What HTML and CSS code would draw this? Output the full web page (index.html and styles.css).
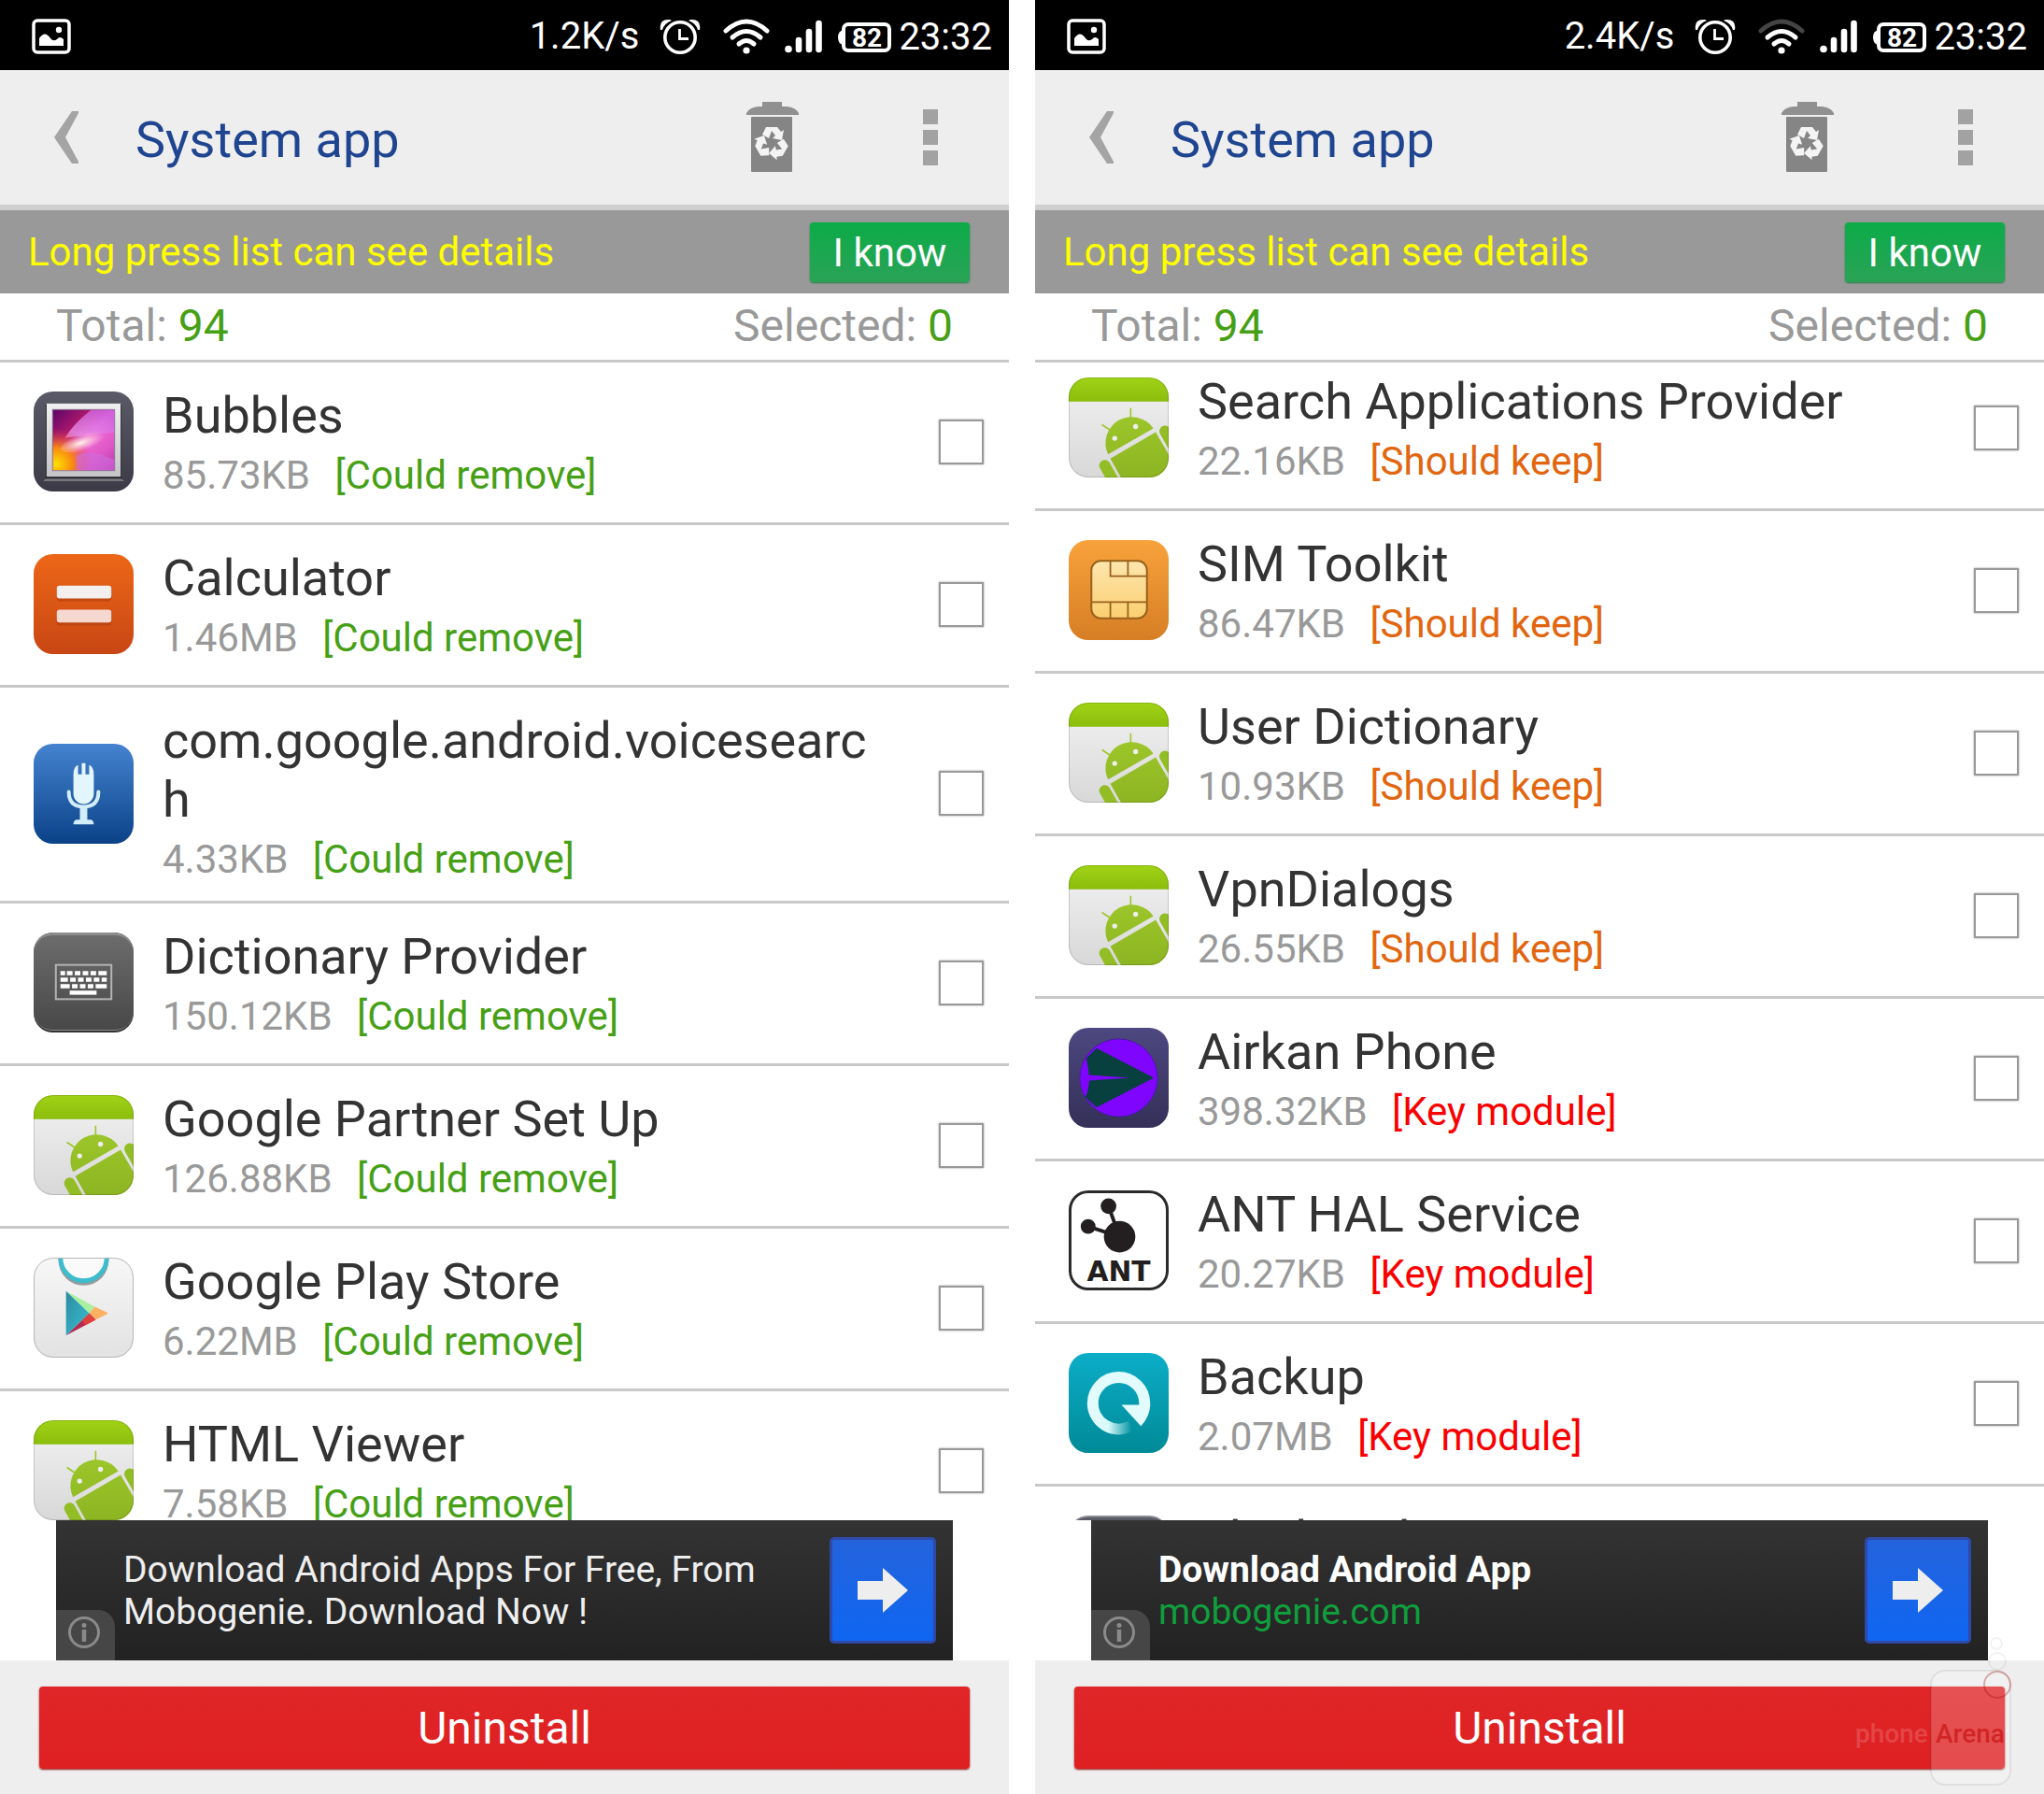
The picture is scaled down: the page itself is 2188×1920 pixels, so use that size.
FILE: index.html
```html
<!DOCTYPE html>
<html lang="en">
<head>
<meta charset="utf-8">
<title>System app</title>
<link rel="stylesheet" href="styles.css">
</head>
<body>
<svg class="defs" width="0" height="0" aria-hidden="true">
  <defs>
    <linearGradient id="g-green" x1="0" y1="0" x2="0" y2="1"><stop offset="0" stop-color="#a0d316"/><stop offset="1" stop-color="#8bbd0c"/></linearGradient>
    <linearGradient id="g-paper" x1="0" y1="0" x2="0" y2="1"><stop offset="0" stop-color="#f2f2f2"/><stop offset="1" stop-color="#d8d8d8"/></linearGradient>
    <linearGradient id="g-robot" gradientUnits="userSpaceOnUse" x1="0" y1="40" x2="0" y2="108"><stop offset="0" stop-color="#9cc62a"/><stop offset="1" stop-color="#8db522"/></linearGradient>
    <linearGradient id="g-slate" x1="0" y1="0" x2="0" y2="1"><stop offset="0" stop-color="#5a5a68"/><stop offset="1" stop-color="#3b3a46"/></linearGradient>
    <linearGradient id="g-photo" x1="0" y1="0" x2="1" y2="1"><stop offset="0" stop-color="#5c0468"/><stop offset=".3" stop-color="#a8186c"/><stop offset=".5" stop-color="#f06ad0"/><stop offset=".75" stop-color="#e058c8"/><stop offset="1" stop-color="#b83aa8"/></linearGradient>
    <linearGradient id="g-beam" x1="0" y1="1" x2="1" y2="0"><stop offset="0" stop-color="#f4a0f0"/><stop offset="1" stop-color="#c657e0"/></linearGradient>
    <radialGradient id="g-glow" cx=".05" cy=".9" r=".6"><stop offset="0" stop-color="#ffe000"/><stop offset=".45" stop-color="#f88a10"/><stop offset="1" stop-color="#e03050" stop-opacity="0"/></radialGradient>
    <radialGradient id="g-flare" cx=".4" cy=".5" r=".5"><stop offset="0" stop-color="#fff6e6"/><stop offset="1" stop-color="#ffc8e8" stop-opacity="0"/></radialGradient>
    <linearGradient id="g-frame" x1="0" y1="0" x2="0" y2="1"><stop offset="0" stop-color="#f0f0f0"/><stop offset="1" stop-color="#c4c4c8"/></linearGradient>
    <linearGradient id="g-orange" x1="0" y1="0" x2="0" y2="1"><stop offset="0" stop-color="#ec6717"/><stop offset="1" stop-color="#c84614"/></linearGradient>
    <linearGradient id="g-blue" x1="0" y1="0" x2="0" y2="1"><stop offset="0" stop-color="#4583d0"/><stop offset="1" stop-color="#0a4287"/></linearGradient>
    <linearGradient id="g-grey" x1="0" y1="0" x2="0" y2="1"><stop offset="0" stop-color="#6c6c6c"/><stop offset="1" stop-color="#484848"/></linearGradient>
    <linearGradient id="g-play" x1="0" y1="0" x2="0" y2="1"><stop offset="0" stop-color="#f7f7f7"/><stop offset="1" stop-color="#e2e2e2"/></linearGradient>
    <linearGradient id="g-teal" x1="0" y1="0" x2="1" y2="1"><stop offset="0" stop-color="#2b8aa0"/><stop offset="1" stop-color="#3cc0d4"/></linearGradient>
    <linearGradient id="g-sim" x1="0" y1="0" x2="0" y2="1"><stop offset="0" stop-color="#f8a23c"/><stop offset="1" stop-color="#d67e24"/></linearGradient>
    <linearGradient id="g-chip" x1="0" y1="0" x2="0" y2="1"><stop offset="0" stop-color="#fde6ae"/><stop offset="1" stop-color="#fbcf70"/></linearGradient>
    <linearGradient id="g-indigo" x1="0" y1="0" x2="0" y2="1"><stop offset="0" stop-color="#4d4880"/><stop offset="1" stop-color="#343058"/></linearGradient>
    <linearGradient id="g-backup" x1="0" y1="0" x2="0" y2="1"><stop offset="0" stop-color="#0cadc8"/><stop offset="1" stop-color="#008a97"/></linearGradient>
    <linearGradient id="g-ring" gradientUnits="userSpaceOnUse" x1="26" y1="0" x2="68" y2="0"><stop offset="0" stop-color="#e2fbfc"/><stop offset=".4" stop-color="#d8fafa"/><stop offset="1" stop-color="#d8fafa" stop-opacity="0"/></linearGradient>
    <clipPath id="c-tile"><rect width="108" height="108" rx="21"/></clipPath>

    <symbol id="i-android" viewBox="0 0 108 108">
      <g clip-path="url(#c-tile)">
        <rect width="108" height="108" fill="url(#g-paper)"/>
        <rect width="108" height="26" fill="url(#g-green)"/>
        <g fill="url(#g-robot)">
          <path d="M42.500 83A28.300 28.300 0 0 1 91.500 55Z"/>
          <path d="M94 59 45 87.500 57 109H109V85Z"/>
        </g>
        <path d="M39 95 49 113M104 58 116 79" stroke="#93bd25" stroke-width="12" stroke-linecap="round"/>
        <path d="M67 33V45M36 51 45 57" stroke="#9cc62a" stroke-width="1.600"/>
        <circle cx="49.700" cy="65.700" r="2.700" fill="#eee"/><circle cx="72.300" cy="53" r="2.700" fill="#eee"/>
      </g>
      <rect x=".5" y=".5" width="107" height="107" rx="21" fill="none" stroke="#000" stroke-opacity=".15"/>
    </symbol>
    <symbol id="i-gallery" viewBox="0 0 108 108">
      <rect width="108" height="108" rx="21" fill="url(#g-slate)"/>
      <path d="M13 14H95V94L98 97H10L13 94Z" fill="#25242c"/>
      <path d="M13 94H95L98 97H10Z" fill="#77757c"/>
      <rect x="14" y="13" width="80" height="79" fill="url(#g-frame)"/>
      <rect x="20" y="19" width="68" height="67" fill="#8a7a92"/>
      <rect x="21" y="20" width="66" height="65" fill="url(#g-photo)"/>
      <path d="M34 50Q42 36 62 20H87V44Z" fill="url(#g-beam)" opacity=".75"/>
      <rect x="21" y="20" width="66" height="65" fill="url(#g-glow)"/>
      <path d="M46 85V70Q60 60 87 74V85Z" fill="#cf6ae0" opacity=".6"/>
      <ellipse cx="56" cy="54" rx="28" ry="9" fill="url(#g-flare)" transform="rotate(-18 56 54)"/>
    </symbol>
    <symbol id="i-calc" viewBox="0 0 108 108">
      <rect width="108" height="108" rx="21" fill="url(#g-orange)"/>
      <rect x="25" y="37" width="59" height="14" rx="3" fill="#a83a0a" opacity=".5"/><rect x="25" y="63" width="59" height="14" rx="3" fill="#a83a0a" opacity=".5"/>
      <rect x="25" y="34" width="59" height="14" rx="3" fill="#f3efee"/><rect x="25" y="60" width="59" height="14" rx="3" fill="#f5d8cf"/>
    </symbol>
    <symbol id="i-voice" viewBox="0 0 108 108">
      <rect width="108" height="108" rx="21" fill="url(#g-blue)"/>
      <path d="M43 33Q43 25 48 23V33H52V21H56V33H60V23Q65 25 65 33V54A11 11 0 0 1 43 54Z" fill="#e4f6fd"/>
      <path d="M38 52Q38 68 54 68Q70 68 70 52" fill="none" stroke="#d3eefb" stroke-width="4" stroke-linecap="round"/>
      <path d="M50 68H58V82H62Q65 83 65 87H43Q43 83 46 82H50Z" fill="#d3eefb"/>
    </symbol>
    <symbol id="i-keyboard" viewBox="0 0 108 108">
      <rect width="108" height="108" rx="21" fill="#333"/>
      <rect width="108" height="106" rx="21" fill="#8c8c8c"/>
      <rect y="3" width="108" height="102" rx="20" fill="url(#g-grey)"/>
      <rect x="24" y="35" width="60" height="37" fill="none" stroke="#b4b4b4" stroke-width="2"/>
      <g stroke="#fff" stroke-width="4.500">
        <path d="M29 44H79" stroke-dasharray="5 2 6 2.500 6 2.500 6 2.500 6 2.500 9"/>
        <path d="M29 51H79" stroke-dasharray="8 2.500 6 2.500 6 2.500 6 2.500 6 2.500 6"/>
        <path d="M29 58H79" stroke-dasharray="10 2.500 6 2.500 6 2.500 6 2.500 12"/>
        <path d="M39 65H68"/>
      </g>
    </symbol>
    <symbol id="i-play" viewBox="0 0 108 108">
      <g clip-path="url(#c-tile)">
        <rect width="108" height="108" fill="url(#g-play)"/>
        <circle cx="54" cy="3" r="25" fill="none" stroke="#9a9a9a" stroke-width="4"/>
        <circle cx="54" cy="0" r="25" fill="#fafafa" stroke="#3cbccc" stroke-width="5"/>
      </g>
      <path d="M35 36 66 53 60 60Z" fill="#a8f0a0"/>
      <path d="M66 53 79 59Q81 60 79 61L67 67 60 60Z" fill="#fbb161"/>
      <path d="M35 84 60 60 67 67Z" fill="#b52a50"/><path d="M60 60 67 67 56 73 52 68Z" fill="#e0403c"/>
      <path d="M35 36 60 60 35 84Z" fill="url(#g-teal)"/>
      <rect x=".5" y=".5" width="107" height="107" rx="21" fill="none" stroke="#b5b5b5"/>
    </symbol>
    <symbol id="i-sim" viewBox="0 0 108 108">
      <rect width="108" height="108" rx="21" fill="url(#g-sim)"/>
      <rect x="24.500" y="22.500" width="60" height="62" rx="10" fill="url(#g-chip)" stroke="#98611b" stroke-width="2"/>
      <path d="M45 22V39H84M64 22V39M25 67H84M45 67V84M64 67V84" fill="none" stroke="#98611b" stroke-width="1.800"/>
    </symbol>
    <symbol id="i-airkan" viewBox="0 0 108 108">
      <rect width="108" height="108" rx="21" fill="url(#g-indigo)"/>
      <circle cx="54" cy="54" r="42" fill="#7f05ff" stroke="#4a18a8" stroke-width="1"/>
      <path d="M30 22 92 54 30 86 18 75Q22 66 22 57L66 54 22 51Q21 42 19 33Z" fill="#07403f"/>
    </symbol>
    <symbol id="i-ant" viewBox="0 0 108 108">
      <rect width="108" height="108" rx="21" fill="#2a2a2a"/>
      <rect x="3" y="3" width="102" height="102" rx="18" fill="#fff"/>
      <g fill="#231f20"><circle cx="43" cy="17" r="8.500"/><circle cx="21" cy="39" r="8"/><circle cx="55" cy="50" r="17"/></g>
      <path d="M43 17 52 42M21 39 46 47" stroke="#231f20" stroke-width="4"/>
      <text class="ant-mark" x="54" y="98" text-anchor="middle">ANT</text>
    </symbol>
    <symbol id="i-backup" viewBox="0 0 108 108">
      <rect width="108" height="108" rx="21" fill="url(#g-backup)"/>
      <path d="M67 79A28 28 0 0 1 26 54" fill="none" stroke="url(#g-ring)" stroke-width="12"/>
      <path d="M26 54.500A28 28 0 0 1 82 54V58" fill="none" stroke="#e2fbfc" stroke-width="12"/>
      <path d="M57 56H88Q88 68 78 79Z" fill="#e2fbfc"/>
    </symbol>
    <symbol id="i-slate" viewBox="0 0 108 108"><rect width="108" height="108" rx="21" fill="#8a8a92"/><rect y="2" width="108" height="106" rx="20" fill="url(#g-slate)"/></symbol>

    <symbol id="s-image" viewBox="0 0 42 38"><rect x="2" y="2" width="38" height="34" rx="4" fill="none" stroke="#fff" stroke-width="3.500"/><path d="M8 29V21Q14 12 20 21Q23 25 27 22Q30 18 34 22V29Z" fill="#fff"/><circle cx="29" cy="12" r="3.200" fill="#fff"/></symbol>
    <symbol id="s-alarm" viewBox="0 0 44 38"><circle cx="22" cy="20" r="16.200" fill="none" stroke="#fff" stroke-width="3.600"/><path d="M21.500 11V21.500H31" fill="none" stroke="#fff" stroke-width="2.800"/><path d="M1 12Q-1 0 11 1L13 2Q5 5 3 12ZM43 12Q45 0 33 1L31 2Q39 5 41 12Z" fill="#fff"/></symbol>
    <symbol id="s-signal" viewBox="0 0 40 36"><circle cx="4" cy="31.500" r="3.800" fill="#fff"/><path d="M15 22V32M26 13V32M36.500 4V32" stroke="#fff" stroke-width="6.600" stroke-linecap="round"/></symbol>
    <symbol id="s-battery" viewBox="0 0 58 32"><rect x="7" y="2" width="49" height="28" rx="5" fill="none" stroke="#fff" stroke-width="4"/><path d="M7 8Q1 9 1 16Q1 23 7 24Z" fill="#fff"/><text class="battery-text" x="32" y="26" text-anchor="middle">82</text></symbol>

    <symbol id="t-back" viewBox="0 0 28 58"><path d="M20 1H27V3L13 29 27 55V57H20L1 29Z" fill="#a4a4a4"/></symbol>
    <symbol id="t-trash" viewBox="0 0 58 76">
      <path d="M18 0H39V5H44Q54 6 57 12V14H1V12Q4 6 14 5H18Z" fill="#909090"/>
      <rect x="6" y="16" width="44" height="59" rx="1" fill="#858585"/>
      <g fill="#f4f4f4">
        <path id="arrow" d="M18 35 22 27H34L38 32 41 30 39 41 29 39 32 36 28 31 25 39Z"/>
        <use href="#arrow" transform="rotate(120 28 44)"/><use href="#arrow" transform="rotate(240 28 44)"/>
      </g>
    </symbol>
    <symbol id="t-more" viewBox="0 0 16 60"><path d="M0 0H16V16H0ZM0 22H16V38H0ZM0 44H16V60H0Z" fill="#a2a2a2"/></symbol>
    <symbol id="a-arrow" viewBox="0 0 54 48"><path d="M0 14H27V0L54 24 27 48V34H0Z" fill="#eee"/></symbol>
    <symbol id="a-info" viewBox="0 0 36 36"><circle cx="18" cy="18" r="15.500" fill="none" stroke="#8a8a8a" stroke-width="3"/><circle cx="18" cy="10.500" r="2.500" fill="#8a8a8a"/><path d="M18 15V28" stroke="#8a8a8a" stroke-width="4.500"/></symbol>
  </defs>
</svg>

<main class="screens">
  <section class="screen">
    <div class="status">
      <svg class="status-image" width="42" height="38"><use href="#s-image"/></svg>
      <span class="speed">1.2K/s</span>
      <svg width="44" height="38"><use href="#s-alarm"/></svg>
      <svg class="wifi" width="50" height="38" viewBox="0 0 50 38"><g fill="none" stroke="#fff" stroke-width="5" stroke-linecap="round"><path d="M3 13Q25 -7 47 13"/><path d="M10 20Q25 7 40 20"/><path d="M17 27Q25 20 33 27"/></g><circle cx="25" cy="34" r="3.600" fill="#fff"/></svg>
      <svg class="signal" width="40" height="36"><use href="#s-signal"/></svg>
      <svg class="battery" width="58" height="32"><use href="#s-battery"/></svg>
      <time>23:32</time>
    </div>
    <header class="appbar">
      <button class="tool" aria-label="Back"><svg width="28" height="58"><use href="#t-back"/></svg></button>
      <h1>System app</h1>
      <button class="tool" aria-label="Recycle bin"><svg width="58" height="76"><use href="#t-trash"/></svg></button>
      <button class="tool tool-more" aria-label="More options"><svg width="16" height="60"><use href="#t-more"/></svg></button>
    </header>
    <div class="notice"><p>Long press list can see details</p><button class="know">I know</button></div>
    <div class="totals"><p>Total: <b>94</b></p><p>Selected: <b>0</b></p></div>
    <div class="list">
      <ul>
        <li><label class="row"><svg class="icon"><use href="#i-gallery"/></svg><span class="info"><span class="name">Bubbles</span><span class="meta">85.73KB <em class="could">[Could remove]</em></span></span><input type="checkbox"></label></li>
        <li><label class="row"><svg class="icon"><use href="#i-calc"/></svg><span class="info"><span class="name">Calculator</span><span class="meta">1.46MB <em class="could">[Could remove]</em></span></span><input type="checkbox"></label></li>
        <li><label class="row"><svg class="icon"><use href="#i-voice"/></svg><span class="info"><span class="name">com.google.android.voicesearch</span><span class="meta">4.33KB <em class="could">[Could remove]</em></span></span><input type="checkbox"></label></li>
        <li><label class="row"><svg class="icon"><use href="#i-keyboard"/></svg><span class="info"><span class="name">Dictionary Provider</span><span class="meta">150.12KB <em class="could">[Could remove]</em></span></span><input type="checkbox"></label></li>
        <li><label class="row"><svg class="icon"><use href="#i-android"/></svg><span class="info"><span class="name">Google Partner Set Up</span><span class="meta">126.88KB <em class="could">[Could remove]</em></span></span><input type="checkbox"></label></li>
        <li><label class="row"><svg class="icon"><use href="#i-play"/></svg><span class="info"><span class="name">Google Play Store</span><span class="meta">6.22MB <em class="could">[Could remove]</em></span></span><input type="checkbox"></label></li>
        <li><label class="row"><svg class="icon"><use href="#i-android"/></svg><span class="info"><span class="name">HTML Viewer</span><span class="meta">7.58KB <em class="could">[Could remove]</em></span></span><input type="checkbox"></label></li>
      </ul>
    </div>
    <aside class="ad">
      <p>Download Android Apps For Free, From Mobogenie. Download Now !</p>
      <button class="go" aria-label="Open ad"><svg width="54" height="48"><use href="#a-arrow"/></svg></button>
      <button class="adinfo" aria-label="About this ad"><svg width="36" height="36"><use href="#a-info"/></svg></button>
    </aside>
    <footer class="footer"><button class="uninstall">Uninstall</button></footer>
  </section>

  <section class="screen">
    <div class="status">
      <svg class="status-image" width="42" height="38"><use href="#s-image"/></svg>
      <span class="speed">2.4K/s</span>
      <svg width="44" height="38"><use href="#s-alarm"/></svg>
      <svg class="wifi" width="50" height="38" viewBox="0 0 50 38"><g fill="none" stroke="#fff" stroke-width="5" stroke-linecap="round"><path d="M3 13Q25 -7 47 13" stroke="#444"/><path d="M10 20Q25 7 40 20"/><path d="M17 27Q25 20 33 27"/></g><circle cx="25" cy="34" r="3.600" fill="#fff"/></svg>
      <svg class="signal" width="40" height="36"><use href="#s-signal"/></svg>
      <svg class="battery" width="58" height="32"><use href="#s-battery"/></svg>
      <time>23:32</time>
    </div>
    <header class="appbar">
      <button class="tool" aria-label="Back"><svg width="28" height="58"><use href="#t-back"/></svg></button>
      <h1>System app</h1>
      <button class="tool" aria-label="Recycle bin"><svg width="58" height="76"><use href="#t-trash"/></svg></button>
      <button class="tool tool-more" aria-label="More options"><svg width="16" height="60"><use href="#t-more"/></svg></button>
    </header>
    <div class="notice"><p>Long press list can see details</p><button class="know">I know</button></div>
    <div class="totals"><p>Total: <b>94</b></p><p>Selected: <b>0</b></p></div>
    <div class="list">
      <ul class="scrolled">
        <li><label class="row"><svg class="icon"><use href="#i-android"/></svg><span class="info"><span class="name">Search Applications Provider</span><span class="meta">22.16KB <em class="should">[Should keep]</em></span></span><input type="checkbox"></label></li>
        <li><label class="row"><svg class="icon"><use href="#i-sim"/></svg><span class="info"><span class="name">SIM Toolkit</span><span class="meta">86.47KB <em class="should">[Should keep]</em></span></span><input type="checkbox"></label></li>
        <li><label class="row"><svg class="icon"><use href="#i-android"/></svg><span class="info"><span class="name">User Dictionary</span><span class="meta">10.93KB <em class="should">[Should keep]</em></span></span><input type="checkbox"></label></li>
        <li><label class="row"><svg class="icon"><use href="#i-android"/></svg><span class="info"><span class="name">VpnDialogs</span><span class="meta">26.55KB <em class="should">[Should keep]</em></span></span><input type="checkbox"></label></li>
        <li><label class="row"><svg class="icon"><use href="#i-airkan"/></svg><span class="info"><span class="name">Airkan Phone</span><span class="meta">398.32KB <em class="key">[Key module]</em></span></span><input type="checkbox"></label></li>
        <li><label class="row"><svg class="icon"><use href="#i-ant"/></svg><span class="info"><span class="name">ANT HAL Service</span><span class="meta">20.27KB <em class="key">[Key module]</em></span></span><input type="checkbox"></label></li>
        <li><label class="row"><svg class="icon"><use href="#i-backup"/></svg><span class="info"><span class="name">Backup</span><span class="meta">2.07MB <em class="key">[Key module]</em></span></span><input type="checkbox"></label></li>
        <li><label class="row"><svg class="icon"><use href="#i-slate"/></svg><span class="info"><span class="name">Black Hole</span></span><input type="checkbox"></label></li>
      </ul>
    </div>
    <aside class="ad">
      <p><strong>Download Android App</strong><br><a href="#">mobogenie.com</a></p>
      <button class="go" aria-label="Open ad"><svg width="54" height="48"><use href="#a-arrow"/></svg></button>
      <button class="adinfo" aria-label="About this ad"><svg width="36" height="36"><use href="#a-info"/></svg></button>
    </aside>
    <footer class="footer"><button class="uninstall">Uninstall</button></footer>
    <svg class="watermark" width="168" height="160" viewBox="0 0 168 160">
      <rect x="82" y="36" width="85" height="122" rx="15" fill="#fff" fill-opacity=".2" stroke="#000" stroke-opacity=".07" stroke-width="2"/>
      <g fill="none" stroke="#000" stroke-opacity=".05" stroke-width="2"><circle cx="152" cy="7" r="6"/><circle cx="153" cy="26" r="9"/></g>
      <circle cx="153" cy="51" r="14" fill="none" stroke="#a00000" stroke-opacity=".3" stroke-width="2"/>
      <text x="1" y="113" fill="#fff" fill-opacity=".18">phone</text>
      <text x="87" y="113" fill="#c00000" fill-opacity=".55">Arena</text>
    </svg>
  </section>
</main>
</body>
</html>
```

FILE: styles.css
```css
* { box-sizing: border-box; }

body {
  margin: 0;
  background: #fff;
  font-family: Roboto, "Liberation Sans", sans-serif;
  color: #333;
}

p, h1, ul { margin: 0; padding: 0; font-weight: 400; }
b, em { font-weight: 400; font-style: normal; }
button { border: 0; padding: 0; background: none; font: inherit; color: inherit; }
svg { flex: none; display: block; }
.defs { position: absolute; }

.screens {
  display: grid;
  grid-template-columns: 1fr 1fr;
  gap: 28px;
  height: 100vh;
}

.screen {
  position: relative;
  display: flex;
  flex-direction: column;
  min-width: 0;
  min-height: 0;
}

/* Status bar */
.status {
  display: flex;
  align-items: center;
  height: 75px;
  padding: 2px 18px 0 34px;
  background: #000;
  color: #fff;
  font-size: 40px;
  line-height: 48px;
}
.speed { margin-left: auto; margin-right: 22px; }
.wifi { margin-left: 24px; }
.signal { margin-left: 16px; }
.battery { margin: 2px 8px 0 16px; }
.status time { margin-top: 2px; }
.battery-text { font: 700 28px Roboto, sans-serif; fill: #fff; }

/* Title bar */
.appbar {
  display: flex;
  align-items: center;
  height: 150px;
  padding: 0 76px 0 57px;
  background: #eee;
  border-bottom: 6px solid #cfcfcf;
}
.appbar h1 {
  flex: 1;
  padding: 4px 0 0 60px;
  font-size: 54px;
  line-height: 63px;
  color: #1f4590;
}
.tool-more { margin-left: 132px; }

/* Hint and counters */
.notice {
  display: flex;
  align-items: center;
  justify-content: space-between;
  height: 89px;
  padding: 0 42px 0 30px;
  background: #999;
  color: #ff0;
  font-size: 42px;
  line-height: 49px;
}
.know {
  width: 171px;
  height: 64px;
  padding-top: 2px;
  border-radius: 4px;
  background: linear-gradient(#0cab48, #2aa357);
  box-shadow: 0 1px 2px #1f7a40;
  color: #fff;
}
.totals {
  display: flex;
  justify-content: space-between;
  padding: 7px 60px 8px;
  border-bottom: 3px solid #c8c8c8;
  color: #999;
  font-size: 48px;
  line-height: 56px;
}
.totals b { color: #46a015; }

/* App list */
.list { flex: 1 1 0; min-height: 0; overflow: hidden; }
.list ul { list-style: none; }
.list .scrolled { margin-top: -15px; }
.row {
  display: flex;
  align-items: center;
  gap: 31px;
  min-height: 174px;
  padding: 0 27px 2px 36px;
  border-bottom: 3px solid #c8c8c8;
}
.icon { width: 107px; height: 107px; }
.info {
  flex: 1;
  align-self: flex-start;
  display: flex;
  flex-direction: column;
  gap: 8px;
  min-width: 0;
  padding: 25px 40px 18px 0;
}
.name { font-size: 54px; line-height: 63px; overflow-wrap: anywhere; }
.meta { font-size: 42px; line-height: 49px; color: #999; }
.meta em { margin-left: 16px; }
.meta .could { color: #46a015; }
.meta .should { color: #e1660f; }
.meta .key { color: #f90000; }
.row input {
  appearance: none;
  flex: none;
  width: 48px;
  height: 48px;
  margin: 0;
  border: 2px solid #999;
  background: #fff;
  box-shadow: 0 0 2px #999;
}
.ant-mark { font: 700 30px "DejaVu Sans", sans-serif; fill: #231f20; }

/* Ad banner */
.ad {
  position: relative;
  display: flex;
  align-items: center;
  justify-content: space-between;
  height: 150px;
  margin: 0 60px;
  padding: 0 18px 0 72px;
  background: linear-gradient(#333, #222);
  color: #eee;
  font-size: 39px;
  line-height: 45px;
}
.ad p { max-width: 720px; padding-top: 2px; }
.ad strong { color: #fff; font-weight: 700; }
.ad a { color: #109d3c; text-decoration: none; }
.go {
  display: grid;
  place-items: center;
  width: 114px;
  height: 114px;
  border: 3px solid #2f49a8;
  border-radius: 5px;
  background: linear-gradient(#2463dc, #0f66f2);
}
.adinfo {
  position: absolute;
  left: 0;
  bottom: 0;
  display: grid;
  place-items: center;
  width: 63px;
  height: 54px;
  padding: 0 3px 6px 0;
  border-top-right-radius: 18px;
  background: #464646;
}

/* Bottom action */
.footer { padding: 28px 42px 27px; background: #eee; }
.uninstall {
  display: block;
  width: 100%;
  height: 88px;
  padding-top: 2px;
  border-radius: 4px;
  background: linear-gradient(#e02628, #de2021);
  box-shadow: 0 1px 2px #8a1a1a;
  color: #fff;
  font-size: 48px;
  line-height: 56px;
}
.watermark {
  position: absolute;
  right: 35px;
  bottom: 8px;
  font: 500 28px Roboto, sans-serif;
  pointer-events: none;
}
```
